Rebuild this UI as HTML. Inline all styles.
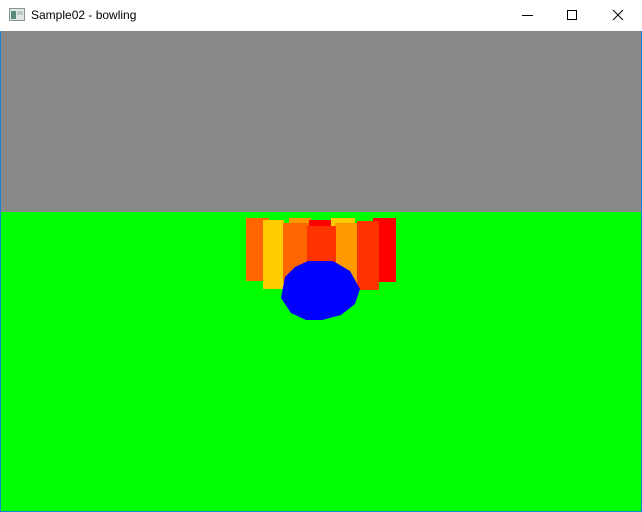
<!DOCTYPE html>
<html><head><meta charset="utf-8"><style>
html,body{margin:0;padding:0;width:642px;height:512px;overflow:hidden;background:#fff}
#win{position:absolute;left:0;top:0;width:640px;height:511px;border:1px solid #1883d7;border-top:none}
#title{position:absolute;left:0;top:0;width:642px;height:31px;background:#fff;font-family:"Liberation Sans",sans-serif;font-size:12px;color:#000}
</style></head><body>
<div id="title">
<svg style="position:absolute;left:9px;top:8px" width="16" height="14"><rect x="0.5" y="0.5" width="15" height="12" fill="#dfe6e4" stroke="#8a9590"/><rect x="2" y="3" width="5" height="8" fill="#5a8a7a"/><rect x="8" y="3" width="6" height="4" fill="#b7cbc4"/></svg>
<span style="position:absolute;left:31px;top:8px">Sample02 - bowling</span>
<svg style="position:absolute;left:500px;top:0" width="142" height="31"><line x1="22" y1="15.5" x2="33" y2="15.5" stroke="#000"/><rect x="67.5" y="10.5" width="9" height="9" fill="none" stroke="#000"/><path d="M113 10 L123 20 M123 10 L113 20" stroke="#000"/></svg>
</div>
<svg style="position:absolute;left:0;top:31px" width="642" height="481">
<g transform="translate(0,-31)">
<rect x="1" y="31" width="640" height="181" fill="#898989"/>
<rect x="1" y="212" width="640" height="299" fill="#00ff00"/>
<rect x="0" y="31" width="1" height="481" fill="#1883d7"/>
<rect x="641" y="31" width="1" height="481" fill="#1883d7"/>
<rect x="0" y="511" width="642" height="1" fill="#1883d7"/>
<rect x="246" y="218" width="23" height="63" fill="#ff6600"/>
<rect x="289" y="218" width="22" height="60" fill="#ff9900"/>
<rect x="309" y="220" width="24" height="50" fill="#ff0000"/>
<rect x="331" y="218" width="24" height="60" fill="#ffcc00"/>
<rect x="373" y="218" width="23" height="64" fill="#ff0000"/>
<rect x="263" y="220" width="21" height="69" fill="#ffcc00"/>
<rect x="283" y="223" width="26" height="60" fill="#ff6600"/>
<rect x="335" y="223" width="24" height="60" fill="#ff9900"/>
<rect x="357" y="221" width="22" height="69" fill="#ff3300"/>
<rect x="307" y="226" width="29" height="40" fill="#ff3300"/>
<polygon points="308,261 333,261 350,271 360,289 355,304 341,315 322,320 306,320 291,313 281,298 285,277 295,267" fill="#0000ff"/>
</g></svg>
</body></html>
